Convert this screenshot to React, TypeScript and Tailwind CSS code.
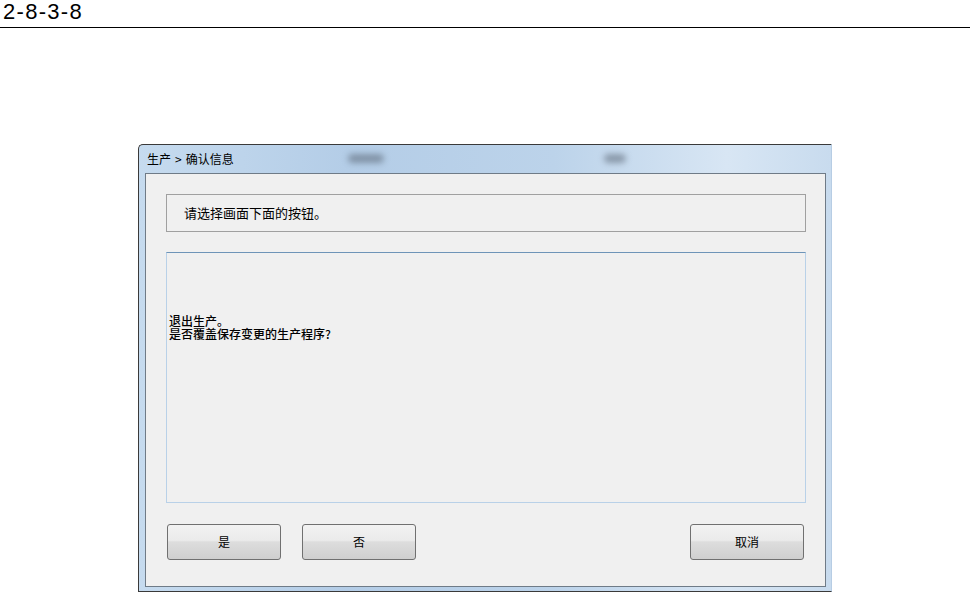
const cjk = "font-['SimSun','Noto_Sans_CJK_SC',sans-serif]";

function DialogButton({ label }: { label: string }) {
  return (
    <button
      className={`h-[36px] w-[114px] rounded-[3px] border border-[#707070] bg-[linear-gradient(to_bottom,#f2f2f2_0%,#ebebeb_45%,#dddddd_50%,#cfcfcf_100%)] text-[12px] text-black ${cjk}`}
    >
      {label}
    </button>
  );
}

export default function App() {
  return (
    <div className="min-h-[592px] w-[970px] bg-white">
      {/* page header */}
      <div className="h-[28px] border-b border-black pl-[3px] font-['Liberation_Sans',Arial,sans-serif] text-[22px] leading-[24px] tracking-[1.3px] text-black">
        2-8-3-8
      </div>

      {/* dialog window */}
      <div className="ml-[138px] mt-[116px] flex h-[448px] w-[694px] flex-col rounded-tl-[5px] border-b border-l border-t border-r border-b-[#3a3a3a] border-l-[#3a3a3a] border-r-[#b7cde4] border-t-[#3a3a3a] bg-[linear-gradient(to_right,#c6dbef_0%,#b4cde7_30%,#bcd3ea_60%,#d8e6f4_85%,#c8dbee_100%)]">
        {/* title bar */}
        <div className="relative flex h-[28px] shrink-0 items-center pl-[8px]">
          <span className={`text-[12px] text-black ${cjk}`}>
            生产<span className="mx-[4px]">&gt;</span>确认信息
          </span>
          <div className="absolute left-[209px] top-[9px] h-[9px] w-[36px] rounded-full bg-[#4d5866] opacity-50 blur-[3px]" />
          <div className="absolute left-[465px] top-[9px] h-[9px] w-[22px] rounded-full bg-[#4d5866] opacity-50 blur-[3px]" />
        </div>

        {/* client area */}
        <div className="mb-[4px] ml-[6px] mr-[5px] flex flex-1 flex-col border border-[#6f7b87] bg-[#f0f0f0] pl-[20px] pr-[19px] pt-[20px]">
          <div className="flex h-[38px] shrink-0 items-center border border-[#a0a0a0] pl-[17px]">
            <span className={`text-[13px] text-black ${cjk}`}>请选择画面下面的按钮。</span>
          </div>

          <div className="mt-[20px] h-[251px] shrink-0 border border-[#b9d1e8] border-t-[#6e94b8] pl-[2px] pt-[61px]">
            <p className={`text-[12px] font-medium leading-[13px] text-black ${cjk}`}>
              退出生产。
              <br />
              是否覆盖保存变更的生产程序?
            </p>
          </div>

          <div className="ml-[1px] mr-[2px] mt-[21px] flex items-center">
            <DialogButton label="是" />
            <div className="ml-[21px]">
              <DialogButton label="否" />
            </div>
            <div className="ml-auto">
              <DialogButton label="取消" />
            </div>
          </div>
        </div>
      </div>
    </div>
  );
}
